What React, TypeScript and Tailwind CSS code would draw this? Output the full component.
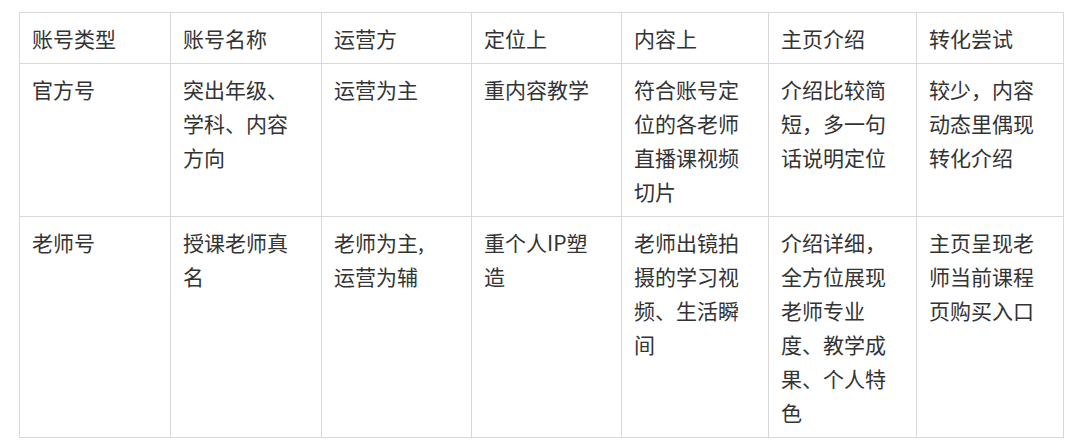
const headers = ["账号类型", "账号名称", "运营方", "定位上", "内容上", "主页介绍", "转化尝试"];

const rows: string[][][] = [
  [
    ["官方号"],
    ["突出年级、", "学科、内容", "方向"],
    ["运营为主"],
    ["重内容教学"],
    ["符合账号定", "位的各老师", "直播课视频", "切片"],
    ["介绍比较简", "短，多一句", "话说明定位"],
    ["较少，内容", "动态里偶现", "转化介绍"],
  ],
  [
    ["老师号"],
    ["授课老师真", "名"],
    ["老师为主,", "运营为辅"],
    ["重个人IP塑", "造"],
    ["老师出镜拍", "摄的学习视", "频、生活瞬", "间"],
    ["介绍详细，", "全方位展现", "老师专业", "度、教学成", "果、个人特", "色"],
    ["主页呈现老", "师当前课程", "页购买入口"],
  ],
];

const widths = [151, 151, 150, 150, 147, 148, 147];

const cellCls = "border border-[#d9d9d9] px-3 py-2 align-top text-left font-normal";

export default function App() {
  return (
    <div
      className="w-[1080px] h-[447px] bg-white pt-3 pl-[19px] text-[#333] text-[21px] leading-[34px]"
      style={{ fontFamily: '"Noto Sans CJK SC", "Noto Sans", sans-serif' }}
    >
      <table className="table-fixed border-collapse w-[1045px]">
        <colgroup>
          {widths.map((w, i) => (
            <col key={i} style={{ width: w }} />
          ))}
        </colgroup>
        <thead>
          <tr>
            {headers.map((h) => (
              <th key={h} className={cellCls}>{h}</th>
            ))}
          </tr>
        </thead>
        <tbody>
          {rows.map((r, i) => (
            <tr key={i}>
              {r.map((lines, j) => (
                <td key={j} className={cellCls}>
                  {lines.map((l, k) => (
                    <div key={k} className="whitespace-nowrap">{l}</div>
                  ))}
                </td>
              ))}
            </tr>
          ))}
        </tbody>
      </table>
    </div>
  );
}
